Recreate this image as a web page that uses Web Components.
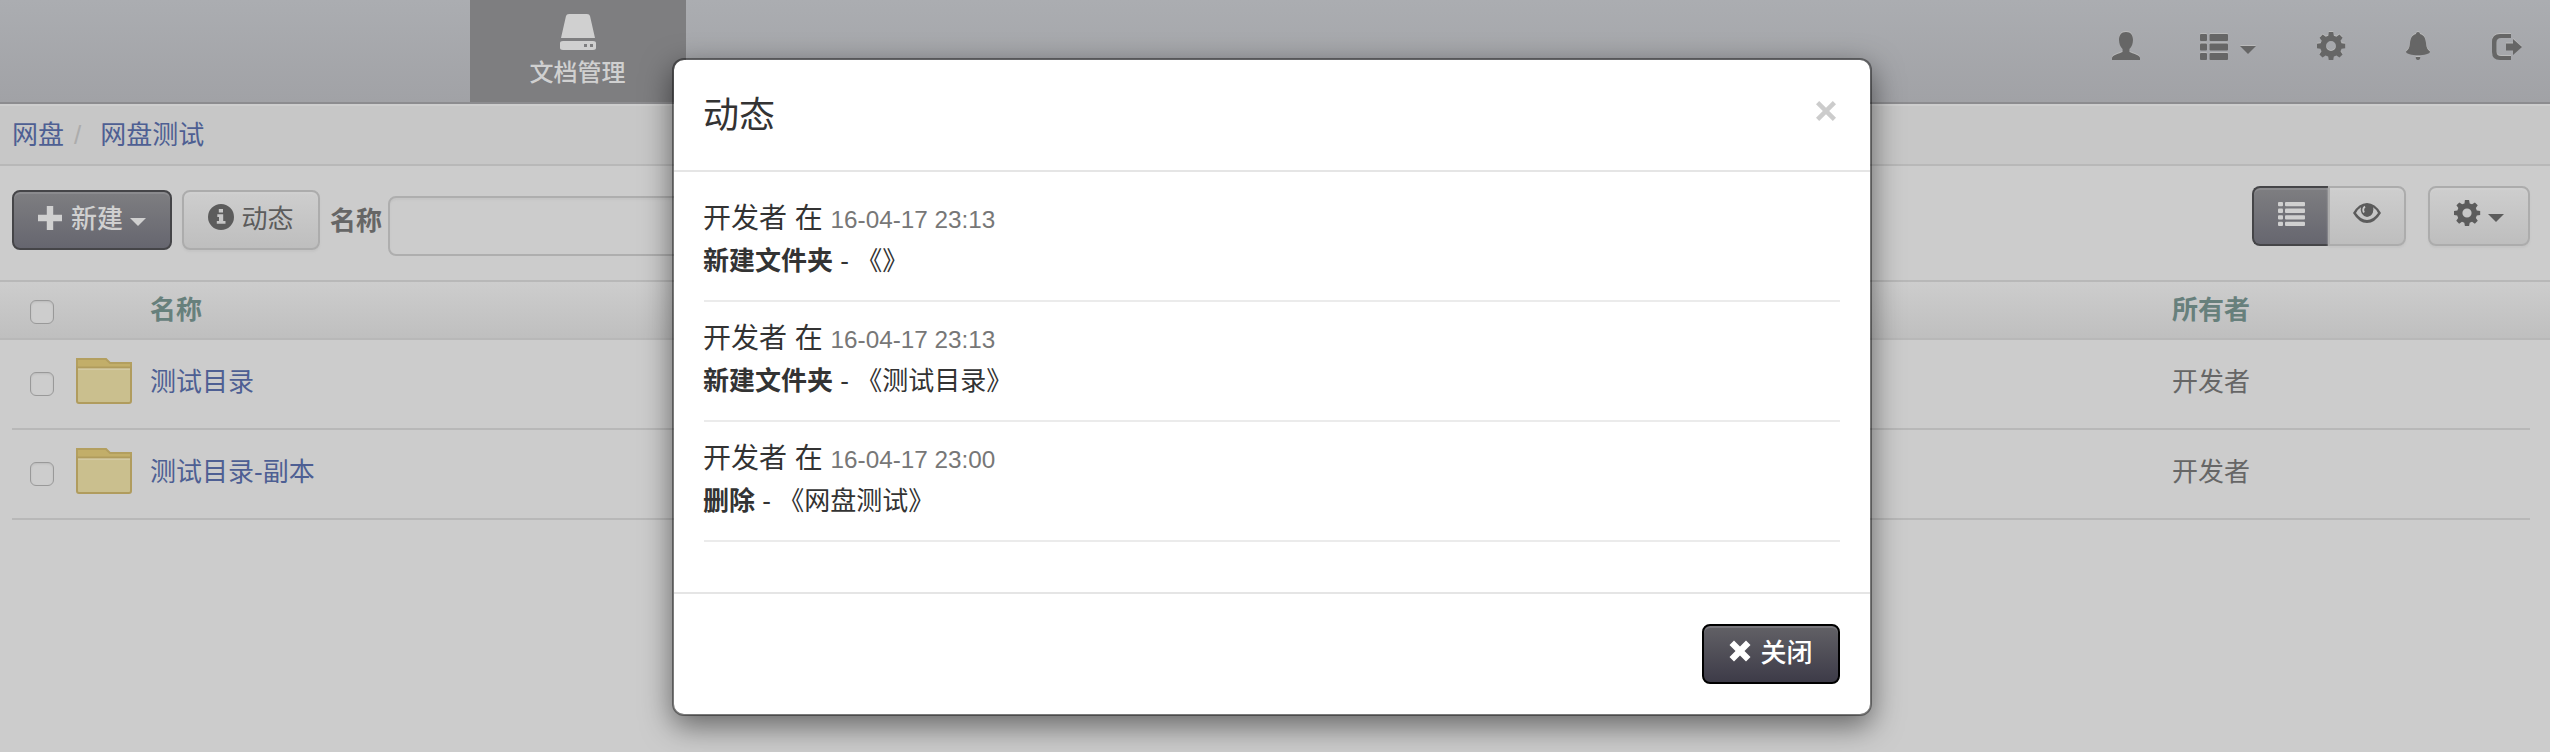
<!DOCTYPE html>
<html lang="zh"><head><meta charset="utf-8"><title>网盘</title>
<style>html,body{margin:0;height:100%;overflow:hidden;background:#ccc}body{font:26px/40px "Liberation Sans","Noto Sans CJK SC",sans-serif;color:#666}</style></head>
<body><disk-app></disk-app>
<script>
const define=(name,css,html)=>customElements.define(name,class extends HTMLElement{
  constructor(){super();this.attachShadow({mode:'open'}).innerHTML='<style>*{box-sizing:border-box}'+css+'</style>'+html;}
});
const gear='<path fill-rule="evenodd" d="M11.6 0h4.800l.7 3.900 2.700 1.100 3.300-2.200 3.300 3.300-2.200 3.200 1.100 2.700 3.900.7v4.600l-3.900.7-1.100 2.700 2.200 3.300-3.300 3.300-3.300-2.200-2.700 1.100-.7 3.900h-4.800l-.7-3.900-2.700-1.100-3.300 2.200-3.300-3.300 2.200-3.300-1.100-2.700L-1 17.300v-4.600L2.900 12 4 9.300 1.800 6.100 5.100 2.800 8.400 5l2.700-1.100zM14 9.700a5.300 5.300 0 1 0 0 10.600a5.300 5.300 0 1 0 0-10.600z"/>';
const ICONS={
  drive:['0 0 36 48','<path d="M9 0h18q2.500 0 3 2.500L35 32H1L6 2.500Q6.500 0 9 0zM3 36h30q3 0 3 3v6q0 3-3 3H3q-3 0-3-3v-6q0-3 3-3zm21 4v4h3v-4zm6 0v4h3v-4z" fill-rule="evenodd"/>'],
  user:['0 0 28 28','<path d="M14 0c5 0 7 3.500 7 8 0 4-1.500 7-3.500 9v3c3 1.500 10.500 3 10.500 6v2H0v-2c0-3 7.500-4.500 10.500-6v-3C8.500 15 7 12 7 8c0-4.500 2-8 7-8z"/>'],
  thlist:['0 0 28 26','<rect width="7" height="7" rx="1"/><rect x="9.500" width="18.500" height="7" rx="1"/><rect y="9.500" width="7" height="7" rx="1"/><rect x="9.500" y="9.500" width="18.500" height="7" rx="1"/><rect y="19" width="7" height="7" rx="1"/><rect x="9.500" y="19" width="18.500" height="7" rx="1"/>'],
  list:['0 0 27 24',[0,6.6,13.2,19.8].map(y=>`<rect y="${y}" width="5" height="4.300" rx="1"/><rect x="7" y="${y}" width="20" height="4.300" rx="1"/>`).join('')],
  gear:['-1 0 30 30',gear],
  bell:['0 0 24 28','<path d="M12 0c1.200 0 2 .8 2 2 4 1 5.500 4 6 9 .5 5 1.500 6.500 4 8.500 0 2.500-6 3.700-12 3.700S0 22 0 19.500c2.500-2 3.500-3.500 4-8.500.5-5 2-8 6-9 0-1.200.8-2 2-2zM9.700 25h4.600q0 3-2.300 3t-2.300-3z"/>'],
  exit:['0 0 30 26','<path d="M19 0H8Q0 0 0 8v10q0 8 8 8h11v-4H9q-4.500 0-4.500-4.500v-9Q4.500 4 9 4h10z"/><path d="M14 9.500h7V5l9 8-9 8v-4.500h-7z"/>'],
  eye:['0 0 28 20','<path fill-rule="evenodd" d="M0 10Q6 0 14 0t14 10Q22 20 14 20T0 10zm3 0q5 7 11 7t11-7Q23 6 20 4.200A7.500 7.500 0 0 1 14 14 7.500 7.500 0 0 1 8 4.200Q5 6 3 10z"/><path d="M11.500 2Q8 4 8.500 8T14 13t6-5-3-6.500z"/><path d="M12 3.500Q9 6 11 9.500" fill="none" stroke="#ccc" stroke-width="1.800"/>'],
  plus:['0 0 24 24','<path d="M8.800 0h6.400v8.800H24v6.400h-8.800V24H8.800v-8.800H0V8.800h8.800z"/>'],
  info:['0 0 26 26','<path fill-rule="evenodd" d="M13 0a13 13 0 1 0 0 26a13 13 0 1 0 0-26zM10.800 5h4.200v3.500h-4.200zM9.300 10.300h5.900V17H17.500v2.800H8.800V17h2.200v-3.900H9.300z"/>'],
  cross:['0 0 22 22','<path d="M5 .5 11 6.500 17 .5 21.500 5l-6 6 6 6-4.500 4.500-6-6-6 6L.5 17l6-6-6-6z"/>'],
  close:['0 0 20 20','<path d="M3.200 0 10 6.800 16.800 0 20 3.200 13.200 10 20 16.800 16.800 20 10 13.200 3.200 20 0 16.800 6.800 10 0 3.200z"/>'],
  caret:['0 0 16 8','<path d="M0 0h16L8 8z"/>'],
  folder:['0 0 56 46','<path d="M1 1h29l4 4h21v12H1z" fill="#c2ae69" stroke="#b39f5f" stroke-width="2"/><path d="M1 9.500h54V43q0 2-2 2H3q-2 0-2-2z" fill="#cabf8e" stroke="#b09c5e" stroke-width="2"/><path d="M2 11.300h52" stroke="#d3caa3" stroke-width="1.500"/>']
};
customElements.define('ui-icon',class extends HTMLElement{connectedCallback(){
  const [box,body]=ICONS[this.getAttribute('name')];
  const w=this.getAttribute('w'),h=this.getAttribute('h');
  this.attachShadow({mode:'open'}).innerHTML=`<style>:host{display:block;flex:none;width:${w}px;height:${h}px}svg{display:block;overflow:visible;fill:currentColor}</style><svg width="${w}" height="${h}" viewBox="${box}" preserveAspectRatio="none">${body}</svg>`;
}});
define('ui-button',`:host{display:flex;box-sizing:border-box;height:60px;border:2px solid #acacac;border-radius:8px;align-items:flex-start;justify-content:center;padding-top:8px;background:linear-gradient(#cecece,#bebebe);color:#5c5c5c;line-height:38px;white-space:nowrap;box-shadow:inset 0 2px 0 #d0d0d0,0 2px 2px #c4c4c4}
:host([dark]){border-color:#454548;background:linear-gradient(#7e7e81,#66666f);color:#d0d0d0;box-shadow:inset 0 2px 0 #8b8b8e}
:host([strong]){border-color:#000;background:linear-gradient(#626166,#3d3b48);color:#fff;box-shadow:inset 0 2px 0 #78777c}
:host([first]){border-right:0;border-radius:8px 0 0 8px}:host([last]){border-radius:0 8px 8px 0}`,'<slot></slot>');
define('top-bar',`:host{display:flex;box-sizing:border-box;height:104px;border-bottom:2px solid #8c8c8f;background:linear-gradient(#abadb1,#a1a2a6);justify-content:space-between}
.tab{margin-left:470px;width:216px;background:#7e7e80;color:#d0d0d0;display:flex;flex-direction:column;align-items:center;padding:14px 1px 0 0;font-size:24px;line-height:36px;font-weight:500}.tab span{margin-top:5px}
nav{display:flex;padding:32px 28px 0 0;color:#666;align-items:flex-start;filter:drop-shadow(0 -1px 0 #bbb)}`,
`<div class="tab"><ui-icon name="drive" w="36" h="36"></ui-icon><span>文档管理</span></div>
<nav><ui-icon name="user" w="28" h="28"></ui-icon><ui-icon name="thlist" w="28" h="26" style="margin:2px 0 0 60px"></ui-icon><ui-icon name="caret" w="16" h="8" style="margin:14px 0 0 12px"></ui-icon><ui-icon name="gear" w="28" h="28" style="margin-left:61px"></ui-icon><ui-icon name="bell" w="24" h="28" style="margin-left:61px"></ui-icon><ui-icon name="exit" w="30" h="26" style="margin:2px 0 0 62px"></ui-icon></nav>`);
define('bread-crumb',`:host{display:flex;box-sizing:border-box;height:62px;border-bottom:2px solid #b8b8b8;padding:11px 12px 0;background:#c7c7c7;box-shadow:inset 0 2px 0 #cecece;color:#4e5f93}i{font-style:normal;color:#acacac;margin:0 19px 0 10px}`,'<span>网盘</span><i>/</i><span>网盘测试</span>');
define('tool-bar',`:host{display:flex;box-sizing:border-box;height:114px;padding:20px 20px 0 12px;align-items:flex-start}
b{margin:15px 5px 0 10px;width:53px}.field{width:440px;height:60px;border:2px solid #aeaeae;border-radius:8px;margin-top:10px;background:#ccc;box-shadow:inset 0 2px 2px #c4c4c4}.grow{flex:1}ui-button{flex:none}`,
`<ui-button dark style="width:160px;margin-top:4px"><ui-icon name="plus" w="24" h="24" style="margin:6px 9px 0 0"></ui-icon><span style="font-weight:500">新建</span><ui-icon name="caret" w="16" h="8" style="margin:18px 0 0 7px"></ui-icon></ui-button>
<ui-button style="width:138px;margin:4px 0 0 10px"><ui-icon name="info" w="26" h="26" style="margin:4px 7px 0 0"></ui-icon>动态</ui-button><b>名称</b><div class="field"></div><div class="grow"></div>
<ui-button dark first style="width:76px"><ui-icon name="list" w="27" h="24" style="margin-top:6px"></ui-icon></ui-button><ui-button last style="width:78px"><ui-icon name="eye" w="28" h="20" style="margin-top:7px"></ui-icon></ui-button>
<ui-button style="width:102px;margin-left:22px"><ui-icon name="gear" w="26" h="26" style="margin-top:4px"></ui-icon><ui-icon name="caret" w="16" h="8" style="margin:18px 0 0 8px"></ui-icon></ui-button>`);
define('check-box',`:host{display:block;box-sizing:border-box;width:24px;height:24px;border:1.500px solid #999;border-radius:6px;background:#cdcdcd;box-shadow:inset 0 1px 2px #bbb}`,'');
define('file-head',`:host{display:flex;box-sizing:border-box;height:60px;border:solid #b8b8b8;border-width:2px 0;background:linear-gradient(#cdcdcd,#bfbfbf);color:#67807c;font-weight:bold;padding:8px 30px 0}check-box{margin-top:10px}.name{margin-left:96px;width:2022px}`,'<check-box></check-box><span class="name">名称</span><span>所有者</span>');
define('file-row',`:host{display:flex;box-sizing:border-box;height:90px;margin:0 20px 0 12px;border-bottom:2px solid #b8b8b8;padding:22px 0 0 18px}check-box{margin-top:10px}ui-icon{margin:-4px 18px 0 22px}.name{color:#4e5f93;width:2022px}`,'<check-box></check-box><ui-icon name="folder" w="56" h="46"></ui-icon><span class="name"><slot></slot></span><span>开发者</span>');
define('feed-item',`:host{display:block;box-sizing:border-box;height:120px;border-bottom:2px solid #ebebeb;padding-top:16px;line-height:42px}.who{font-size:28px}.line{display:block;height:42px;white-space:pre;margin-left:-1px}small{font-size:24.300px;color:#777}`,
`<span class="line who">开发者 在 <small><slot name="time"></slot></small></span><span class="line"><b><slot name="act"></slot></b> - <slot></slot></span>`);
define('feed-dialog',`:host{display:flex;flex-direction:column;box-sizing:border-box;position:absolute;left:672px;top:58px;width:1200px;height:658px;border:2px solid rgba(0,0,0,.4);border-radius:12px;background:#fff;background-clip:padding-box;box-shadow:0 10px 30px rgba(0,0,0,.5);color:#333}
header{display:flex;justify-content:space-between;height:112px;border-bottom:2px solid #e5e5e5;padding:35px 34px 0 29px;font-size:36px;line-height:42px}
main{padding:10px 30px 0;height:420px}footer{border-top:2px solid #e5e5e5;padding:30px;display:flex;justify-content:flex-end}`,
`<header><span>动态</span><ui-icon name="close" w="20" h="20" style="color:#ccc;margin-top:6px"></ui-icon></header>
<main><feed-item><span slot="time">16-04-17 23:13</span><span slot="act">新建文件夹</span>《》</feed-item><feed-item><span slot="time">16-04-17 23:13</span><span slot="act">新建文件夹</span>《测试目录》</feed-item><feed-item><span slot="time">16-04-17 23:00</span><span slot="act">删除</span>《网盘测试》</feed-item></main>
<footer><ui-button strong style="width:138px"><ui-icon name="cross" w="22" h="22" style="margin:6px 9px 0 0"></ui-icon><span style="font-weight:500">关闭</span></ui-button></footer>`);
define('disk-app',`:host{display:block;height:752px;background:#ccc}`,`<top-bar></top-bar><bread-crumb></bread-crumb><tool-bar></tool-bar><file-head></file-head><file-row>测试目录</file-row><file-row>测试目录-副本</file-row><feed-dialog></feed-dialog>`);
</script></body></html>
